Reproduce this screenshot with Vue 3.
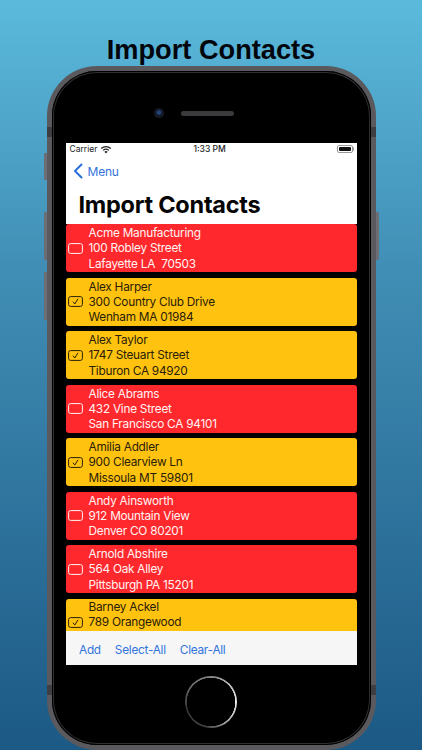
<script setup>
const contacts = [
  { lines: ['Acme Manufacturing', '100 Robley Street', 'Lafayette LA  70503'], on: false },
  { lines: ['Alex Harper', '300 Country Club Drive', 'Wenham MA 01984'], on: true },
  { lines: ['Alex Taylor', '1747 Steuart Street', 'Tiburon CA 94920'], on: true },
  { lines: ['Alice Abrams', '432 Vine Street', 'San Francisco CA 94101'], on: false },
  { lines: ['Amilia Addler', '900 Clearview Ln', 'Missoula MT 59801'], on: true },
  { lines: ['Andy Ainsworth', '912 Mountain View', 'Denver CO 80201'], on: false },
  { lines: ['Arnold Abshire', '564 Oak Alley', 'Pittsburgh PA 15201'], on: false },
  { lines: ['Barney Ackel', '789 Orangewood'], on: true },
]
</script>

<template>
  <div class="page">
    <h1 class="headline">Import Contacts</h1>
    <div class="phone">
      <span class="btn btn-mute"></span>
      <span class="btn btn-up"></span>
      <span class="btn btn-down"></span>
      <span class="btn btn-power"></span>
      <div class="frame">
        <span class="band band-tl"></span>
        <span class="band band-tr"></span>
        <span class="band band-bl"></span>
        <span class="band band-br"></span>
        <div class="body">
          <div class="sensors">
            <span class="camera"></span>
            <span class="speaker"></span>
          </div>
          <div class="screen">
            <div class="status">
              <div class="status-left">
                <span>Carrier</span>
                <svg class="wifi" viewBox="0 0 12 9" width="12" height="9">
                  <path d="M6 8.6 4.4 6.8a2.3 2.3 0 0 1 3.2 0z" fill="#222" />
                  <path d="M3.5 5.8a3.7 3.7 0 0 1 5 0l.8-.9a5 5 0 0 0-6.6 0z" fill="#222" />
                  <path d="M1.7 3.9a6.3 6.3 0 0 1 8.6 0l.9-.9a7.6 7.6 0 0 0-10.4 0z" fill="#222" />
                </svg>
              </div>
              <span class="clock">1:33 PM</span>
              <div class="battery"><span class="battery-fill"></span></div>
            </div>
            <div class="nav">
              <svg class="chevron" viewBox="0 0 10 16" width="10" height="16">
                <path d="M8.5 1.5 2 8l6.500 6.500" fill="none" stroke="#2a6fdc" stroke-width="2" stroke-linecap="round" stroke-linejoin="round" />
              </svg>
              <span>Menu</span>
            </div>
            <div class="title">Import Contacts</div>
            <div class="list">
              <div v-for="c in contacts" :key="c.lines[0]" class="row" :class="c.on ? 'row-on' : 'row-off'">
                <svg class="check" viewBox="0 0 15 11" width="15" height="11">
                  <rect x="0.6" y="0.6" width="13.8" height="9.800" rx="2" fill="none" stroke="currentColor" stroke-width="1" />
                  <path v-if="c.on" d="M5 5.700 6.800 8 10 2.800" fill="none" stroke="currentColor" stroke-width="1" />
                </svg>
                <div class="lines">
                  <div v-for="l in c.lines" :key="l" class="line">{{ l }}</div>
                </div>
              </div>
            </div>
            <div class="toolbar">
              <span>Add</span>
              <span>Select-All</span>
              <span>Clear-All</span>
            </div>
          </div>
          <div class="home-area"><span class="home"></span></div>
        </div>
      </div>
    </div>
  </div>
</template>

<style>
html, body { margin: 0; }
</style>

<style scoped>
.page {
  width: 422px;
  height: 750px;
  overflow: hidden;
  background: linear-gradient(180deg, #5bbadc 0%, #418fb6 35%, #1c5985 100%);
  display: flex;
  flex-direction: column;
  align-items: center;
  box-sizing: border-box;
  padding-top: 34px;
  font-family: Inter, "Liberation Sans", sans-serif;
}
.headline {
  margin: 0;
  height: 32px;
  line-height: 32px;
  font-family: "Liberation Sans", Arial, sans-serif;
  font-size: 27.200px;
  font-weight: 700;
  color: #02060c;
}
.phone {
  position: relative;
  width: 329px;
  height: 684px;
  flex: none;
}
.btn {
  position: absolute;
  background: #6d6e73;
  border-radius: 1px;
}
.btn-mute { left: -3px; top: 87px; width: 3px; height: 27px; }
.btn-up { left: -3px; top: 146px; width: 3px; height: 48px; }
.btn-down { left: -3px; top: 206px; width: 3px; height: 48px; }
.btn-power { right: -3px; top: 146px; width: 3px; height: 48px; }
.frame {
  position: relative;
  box-sizing: border-box;
  width: 100%;
  height: 100%;
  background: #5a5a5e;
  border-radius: 50px;
  padding: 5px;
}
.band {
  position: absolute;
  width: 5px;
  height: 10px;
  background: #3f3f43;
}
.band-tl { left: 0; top: 61px; }
.band-tr { right: 0; top: 61px; }
.band-bl { left: 0; bottom: 55px; }
.band-br { right: 0; bottom: 55px; }
.body {
  box-sizing: border-box;
  width: 100%;
  height: 100%;
  background: #000;
  border-radius: 45px;
  box-shadow: inset 0 0 0 1px #000, inset 0 0 0 2px #2e2e31;
  padding: 0 14px;
  display: flex;
  flex-direction: column;
}
.sensors {
  height: 72px;
  flex: none;
  display: flex;
  align-items: center;
  justify-content: center;
  padding-left: 1px;
  gap: 17px;
  box-sizing: border-box;
  padding-top: 12px;
}
.camera {
  width: 10px;
  height: 10px;
  border-radius: 50%;
  background: radial-gradient(circle at 50% 45%, #24447a 0 20%, #10141e 45%, #2c2e36 100%);
  margin-left: -36px;
}
.speaker {
  width: 53px;
  height: 5px;
  border-radius: 3px;
  background: #3a3a3d;
}
.screen {
  height: 522px;
  flex: none;
  background: #fff;
  display: flex;
  flex-direction: column;
  overflow: hidden;
}
.status {
  height: 12px;
  flex: none;
  padding: 0 4px 0 4px;
  display: flex;
  align-items: center;
  justify-content: space-between;
  font-size: 8.500px;
  color: #222;
  position: relative;
}
.status-left {
  display: flex;
  align-items: center;
  gap: 3px;
}
.clock {
  position: absolute;
  left: 128px;
  font-weight: 500;
}
.battery {
  position: relative;
  box-sizing: border-box;
  width: 16px;
  height: 8px;
  border: 1px solid #999;
  border-radius: 2px;
  padding: 1px;
  display: flex;
}
.battery::after {
  content: "";
  position: absolute;
  right: -2.500px;
  top: 1px;
  width: 1.500px;
  height: 4px;
  background: #aaa;
  border-radius: 0 1px 1px 0;
}
.battery-fill {
  flex: 1;
  background: #111;
  border-radius: 1px;
}
.nav {
  height: 32px;
  flex: none;
  display: flex;
  align-items: center;
  gap: 5px;
  padding-left: 7px;
  font-size: 12px;
  letter-spacing: -0.2px;
  color: #3274dc;
}
.title {
  height: 37px;
  flex: none;
  padding-left: 13px;
  font-size: 23.500px;
  line-height: 35px;
  font-weight: 700;
  color: #050505;
  letter-spacing: -0.25px;
}
.list {
  flex: 1;
  min-height: 0;
  overflow: hidden;
  background: #000;
  display: flex;
  flex-direction: column;
  gap: 5.500px;
}
.row {
  flex: none;
  height: 48px;
  display: flex;
  align-items: center;
  gap: 6px;
  padding-left: 2px;
  border-radius: 3px;
  box-sizing: border-box;
}
.row-off { background: #ff282c; color: #fff3f3; }
.row-on { background: #ffc30f; color: #2a2008; }
.check { flex: none; }
.lines {
  font-size: 11.800px;
  letter-spacing: -0.25px;
  line-height: 15.300px;
  white-space: pre;
  padding-top: 2px;
}
.line { height: 15.300px; }
.row:last-child { align-items: flex-start; }
.row:last-child .lines { padding-top: 1.500px; }
.row:last-child .check { margin-top: 18px; }
.toolbar {
  height: 34px;
  flex: none;
  box-sizing: border-box;
  padding-top: 3px;
  background: #f6f6f7;
  display: flex;
  align-items: center;
  gap: 14px;
  padding-left: 13.500px;
  font-size: 11.800px;
  letter-spacing: -0.25px;
  color: #3274dc;
}
.home-area {
  flex: 1;
  display: flex;
  align-items: center;
  justify-content: center;
  padding-bottom: 7px;
}
.home {
  box-sizing: border-box;
  width: 52px;
  height: 52px;
  border-radius: 50%;
  background:
    radial-gradient(circle, #000 0 24px, transparent 24.500px),
    conic-gradient(from 0deg, #888, #eee 90deg, #bbb 130deg, #444 190deg, #333 250deg, #666 300deg, #888);
}
</style>
